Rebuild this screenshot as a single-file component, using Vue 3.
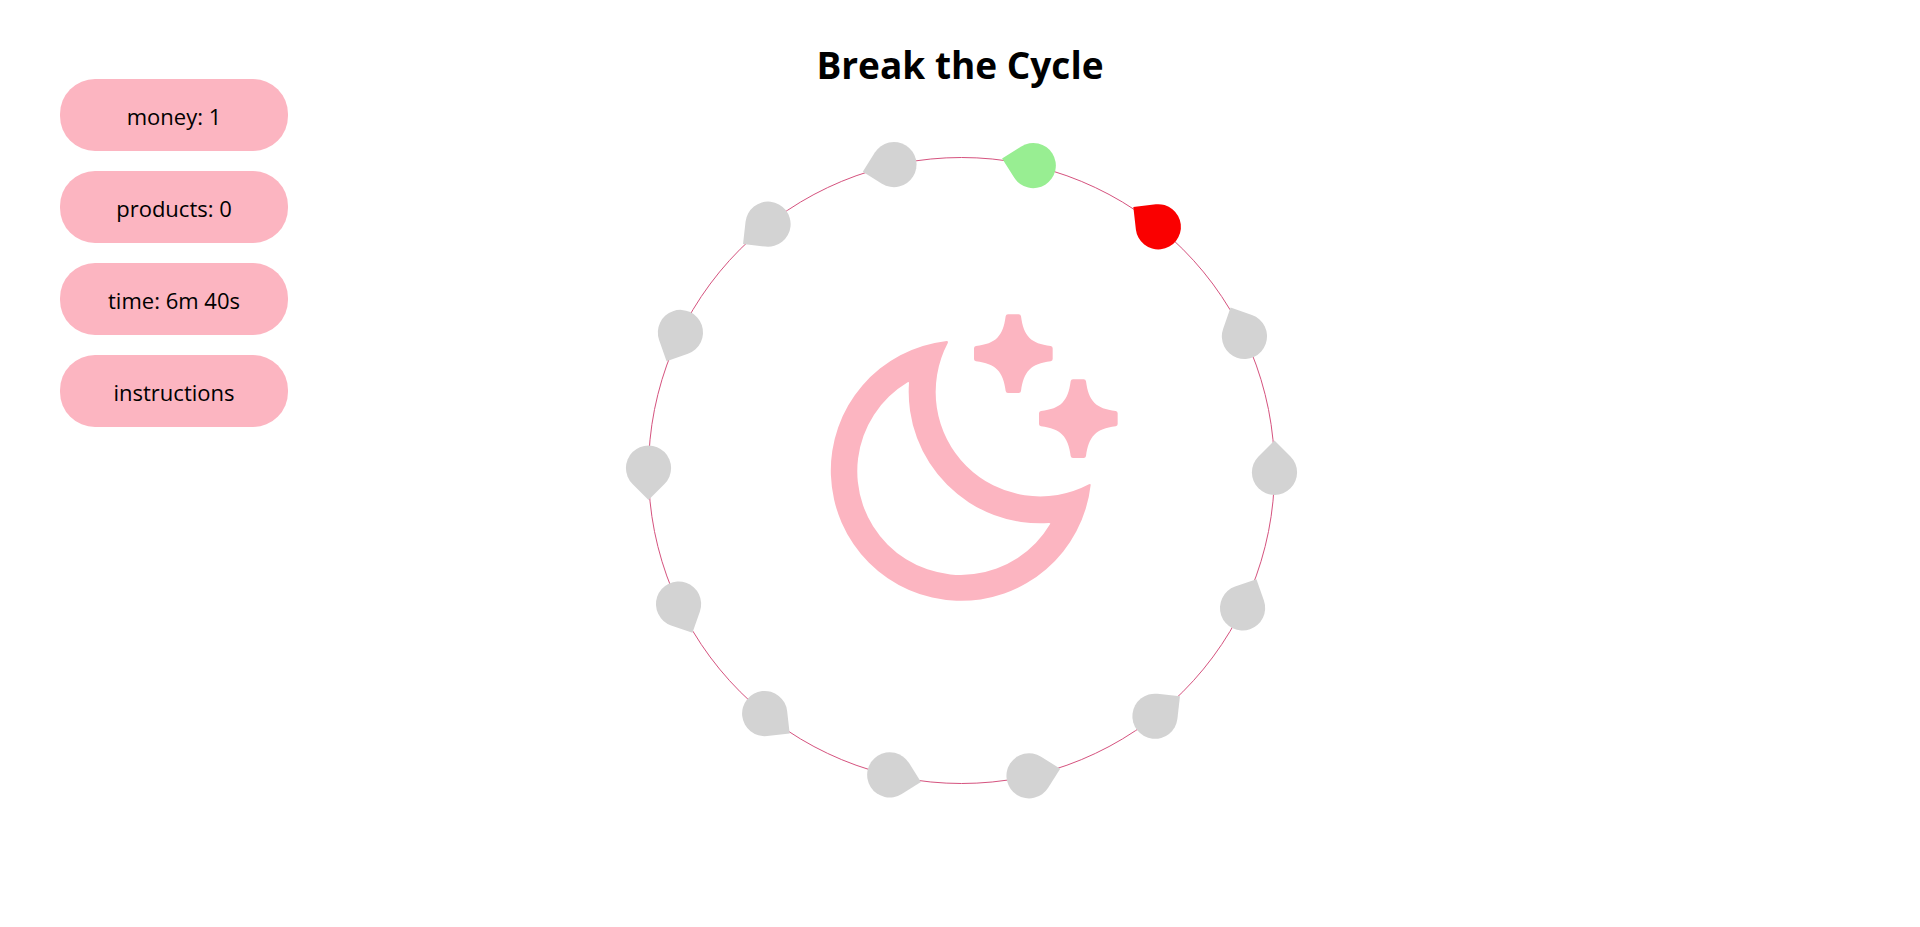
<script setup>
import { computed, ref } from 'vue'

const money = ref(1)
const products = ref(0)
const secondsLeft = ref(400)

const time = computed(
  () => `${Math.floor(secondsLeft.value / 60)}m ${secondsLeft.value % 60}s`
)

const COUNT = 14
const RADIUS = 313
const PETAL = 'M0 -32 L16 -16 A22.6 22.6 0 1 1 -16 -16 Z'

// Day 0 sits just right of the top; the rest follow clockwise.
const days = Array.from({ length: COUNT }, (_, i) => {
  const turn = (i + 0.5) * (360 / COUNT) - 90
  const angle = ((turn + 0.4) * Math.PI) / 180
  return {
    id: i,
    state: i === 0 ? 'current' : i === 1 ? 'period' : 'idle',
    transform: `translate(${RADIUS * Math.cos(angle)} ${RADIUS * Math.sin(angle)}) rotate(${turn})`
  }
})

const STAR =
  'M16 -118 Q22 -118 23 -112 C27 -82 34 -62 48 -48 C62 -34 82 -27 112 -23 Q118 -22 118 -16 ' +
  'V16 Q118 22 112 23 C82 27 62 34 48 48 C34 62 27 82 23 112 Q22 118 16 118 ' +
  'H-16 Q-22 118 -23 112 C-27 82 -34 62 -48 48 C-62 34 -82 27 -112 23 Q-118 22 -118 16 ' +
  'V-16 Q-118 -22 -112 -23 C-82 -27 -62 -34 -48 -48 C-34 -62 -27 -82 -23 -112 Q-22 -118 -16 -118 Z'
</script>

<template>
  <div class="page">
    <aside class="stats">
      <div class="pill">money: {{ money }}</div>
      <div class="pill">products: {{ products }}</div>
      <div class="pill">time: {{ time }}</div>
      <button type="button" class="pill">instructions</button>
    </aside>
    <main class="board">
      <h1 class="title">Break the Cycle</h1>
      <svg class="cycle" viewBox="0 0 680 680" role="img" aria-label="Cycle of fourteen days">
        <circle class="ring" cx="341.5" cy="340.5" :r="RADIUS" />
        <g transform="translate(341.5 340.2)">
          <path
            v-for="day in days"
            :key="day.id"
            :class="day.state"
            :d="PETAL"
            :transform="day.transform"
          />
        </g>
        <g class="moon" transform="translate(200 170) scale(0.33333)">
          <path
            fill-rule="evenodd"
            d="M380 123 A391 391 0 1 0 812 555 Q812 550 807 553 A313.5 313.5 0 0 1 383 130 Q386 123 380 123 Z
               M267 249 A394 394 0 0 0 687 669 Q693 669 690 673 A311 311 0 1 1 263 247 Q267 244 267 249 Z"
          />
          <path :d="STAR" transform="translate(580 161)" />
          <path :d="STAR" transform="translate(775 356)" />
        </g>
      </svg>
    </main>
  </div>
</template>

<style>
body {
  margin: 0;
  background: #fff;
}
</style>

<style scoped>
.page {
  display: grid;
  grid-template-columns: 1fr auto 1fr;
  box-sizing: border-box;
  color: #000;
  font-family: "Segoe UI", "Open Sans", "Noto Sans", sans-serif;
}

.stats {
  display: flex;
  flex-direction: column;
  gap: 20px;
  width: 228px;
  padding: 79px 0 0 60px;
}

.pill {
  box-sizing: border-box;
  width: 100%;
  padding: 21px 20px 19px;
  border: 0;
  border-radius: 35px;
  background: #fcb5c1;
  color: inherit;
  font: inherit;
  font-size: 22px;
  line-height: 32px;
  text-align: center;
}

button.pill {
  cursor: pointer;
}

.board {
  display: flex;
  flex-direction: column;
  align-items: center;
}

.title {
  margin: 35px 0;
  font-size: 37px;
  font-weight: 700;
  line-height: 60px;
}

.cycle {
  display: block;
  width: 680px;
  max-width: 100%;
}

.ring {
  fill: none;
  stroke: #d5527e;
  stroke-width: 1;
}

.moon {
  fill: #fcb5c1;
}

.idle {
  fill: #d3d3d3;
}

.current {
  fill: #98ee92;
}

.period {
  fill: #fa0000;
}
</style>
